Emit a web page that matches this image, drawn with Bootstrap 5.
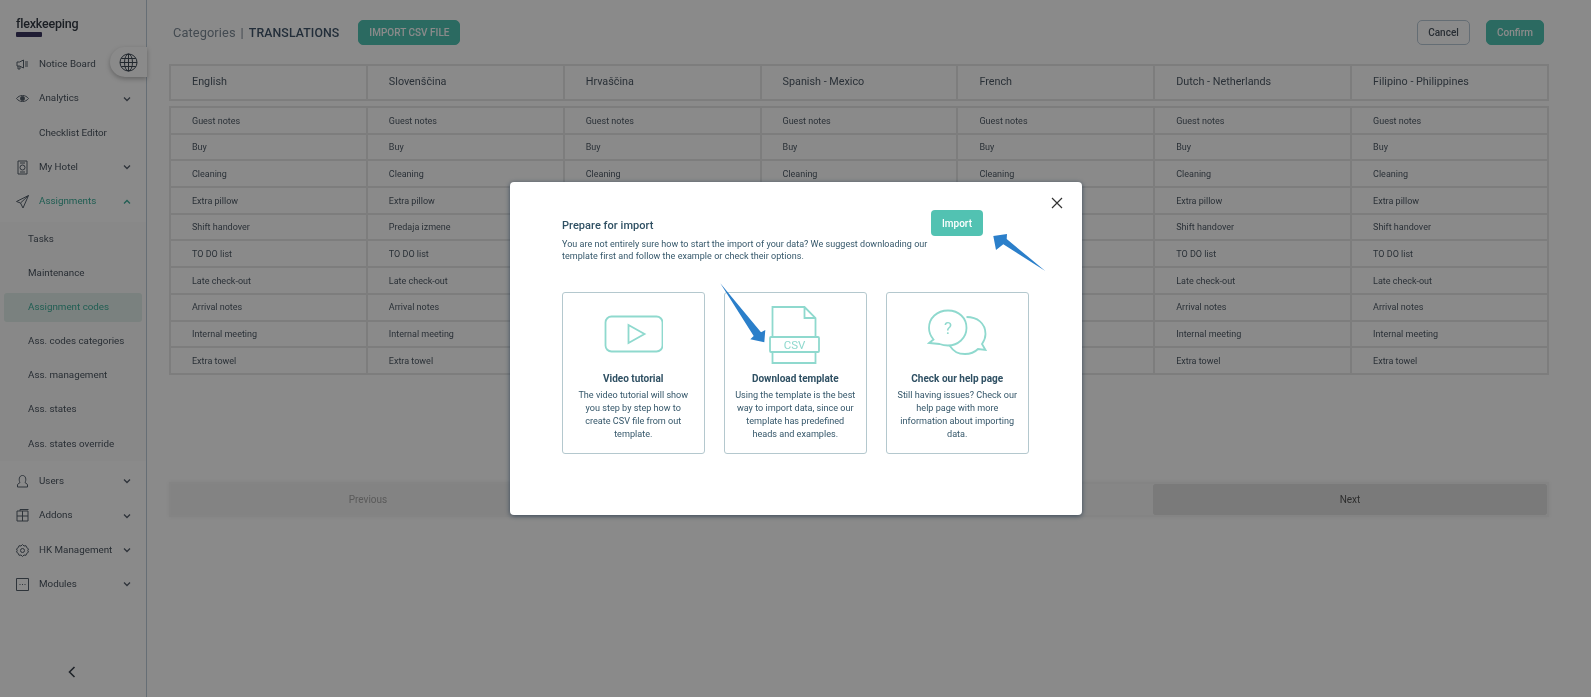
<!DOCTYPE html>
<html lang="en">
<head>
<meta charset="utf-8">
<title>Translations</title>
<link href="https://cdn.jsdelivr.net/npm/bootstrap@5.3.0/dist/css/bootstrap.min.css" rel="stylesheet">
<style>
html,body{height:100%;overflow:hidden}
body{font-family:Roboto,"Liberation Sans",sans-serif;background:#fff;color:#4a5a68}
.fk-shell{height:697px;filter:blur(.45px)}
.fk-side{width:147px;flex:none;border-right:1px solid #bccbd8;position:relative;padding-top:47px}
.fk-logo{position:absolute;left:16px;top:18px;line-height:1}
.fk-logo b{display:block;font-weight:500;font-size:12.5px;letter-spacing:-.2px;color:#333a44}
.fk-logo i{display:block;width:26px;height:5px;margin-top:1px;border-radius:1px;background:#3c3760}
.fk-globe{position:absolute;left:110px;top:47px;width:37px;height:30px;border-radius:15px 0 0 15px;background:#fff;box-shadow:0 2px 5px rgba(0,0,0,.28);display:flex;align-items:center;justify-content:center;z-index:2}
.fk-item{height:34.4px;padding-left:16px;padding-right:15px;font-size:9.8px;color:#4b5560;display:flex;align-items:center}
.fk-item svg.ic{width:13px;height:15px;flex:none;margin-right:10px;fill:none;stroke:#56606c;stroke-width:1}
.fk-item .sp{width:13px;flex:none;margin-right:10px}
.fk-item svg.ch{width:8px;height:6px;margin-left:auto;fill:none;stroke:#56606c;stroke-width:1.3}
.fk-item.on{color:#3dae9a}
.fk-item.on svg.ch{stroke:#3dae9a}
.fk-sub{margin-top:3px;margin-bottom:3px;background:#fcfcfc}
.fk-sublink{height:34.2px;padding-left:28px;font-size:9.8px;display:flex;align-items:center;color:#4b5560}
.fk-sublink.on{margin:2.5px 4px;height:29px;padding-left:24px;background:#e2efea;border-radius:3px;color:#3dae9a}
.fk-back{position:absolute;left:68px;top:666px;width:8px;height:12px;fill:none;stroke:#3a424c;stroke-width:1.6}
.fk-main{flex:1;padding:20px 47px 0 22px;min-width:0}
.fk-top{height:25px;margin-bottom:19px}
.fk-crumb{font-size:12.8px;color:#7d8a96;margin-left:4px;letter-spacing:.1px}
.fk-crumb i{font-style:normal;margin:0 5px}
.fk-crumb strong{font-weight:500;font-size:12.3px;color:#41566b}
.fk-btn{height:25px;padding:0 10px;font-size:10px;font-weight:500;line-height:23px;border-radius:5px}
.fk-teal{background:#50c4b4;border:1px solid #50c4b4;color:#fff}
.fk-csv{margin-left:19px}
.fk-ghost{background:#fff;border:1px solid #b9c9d6;color:#4b5560;width:53px;padding:0}
.fk-conf{width:58px;padding:0}
.fk-tbl{table-layout:fixed;width:1380px;margin:0;border-collapse:collapse}
.fk-tbl th,.fk-tbl td{border:2px solid #e7e7e7;padding:0 0 0 21px;vertical-align:middle;background:transparent;color:inherit;box-shadow:none}
.fk-tbl th{height:35px;font-size:10.8px;font-weight:400;color:#4e5a66}
.fk-tbl td{height:26.7px;padding-top:2px;font-size:9px;color:#4e5a66}
.fk-head{margin-bottom:5px!important}
.fk-pager{margin-top:107px;width:1380px;height:35px;border:2px solid #f4f4f4;box-shadow:0 0 4px rgba(0,0,0,.06)}
.fk-pg{font-size:10px;display:flex;align-items:center;justify-content:center;height:100%}
.fk-prev{width:394px;background:#f2f2f2;color:#a6a6a6}
.fk-gap{flex:1;background:#f8f8f8}
.fk-next{width:394px;background:#e2e2e2;color:#555;border-radius:2px}
.modal-backdrop.show{opacity:.46;background:#000}
.fk-dlg{max-width:572px;width:572px;min-height:100%}
.fk-modal{border:0;border-radius:4px;box-shadow:0 1px 5px rgba(28,50,72,.75);position:relative;padding:28px 53px 61px 52.5px;color:#35576a;filter:blur(.3px)}
.fk-x{position:absolute;left:541px;top:15px;width:12px;height:12px;stroke:#333;stroke-width:1.2;fill:none}
.fk-intro{width:369px;flex:none}
.fk-ttl{font-size:11px;font-weight:500;line-height:16px;margin:8px 0 4px;letter-spacing:.05px;color:#2f5063}
.fk-txt{font-size:9px;line-height:12px;margin:0;letter-spacing:.03px}
.fk-imp{width:52px;height:26px;background:#52c2b2;color:#fff;border:0;border-radius:4px;font-size:10px;font-weight:500;padding:0}
.fk-cards{margin-top:30px;gap:19.5px}
.fk-card{width:142.5px;height:161.5px;border:1px solid #b4c8ce;border-radius:3px;padding:13px 10px 0;text-align:center;flex:none}
.fk-pic{height:58px;display:block;margin:0 auto}
.fk-ct{font-size:10px;font-weight:700;line-height:13px;margin:8px 0 4px;color:#2f5063}
.fk-cd{font-size:9.1px;line-height:12.8px;margin:0}
.fk-arrows{position:absolute;left:0;top:0;width:572px;height:333px;pointer-events:none}
.fk-ico{fill:none;stroke:#8fd9ce;stroke-width:1.8}
.fk-ico text{fill:#8fd9ce;stroke:none;font-family:Roboto,sans-serif}
</style>
</head>
<body>
<div class="d-flex fk-shell">
  <aside class="fk-side">
    <div class="fk-logo"><b>flexkeeping</b><i></i></div>
    <div class="fk-globe"><svg width="19" height="19" viewBox="0 0 19 19" fill="none" stroke="#3f4a56" stroke-width="1"><circle cx="9.5" cy="9.5" r="8.5"/><ellipse cx="9.5" cy="9.5" rx="4" ry="8.5"/><path d="M9.5 1v17M1 9.5h17M2.2 5.5h14.6M2.2 13.5h14.6"/></svg></div>
    <div class="fk-item"><svg class="ic" viewBox="0 0 13 15"><path d="M1 5h2.500l4-2v8l-4-2H1zM2 9v3h2V9M9 5h3M9 7h3M9 9h3"/></svg>Notice Board</div>
    <div class="fk-item"><svg class="ic" viewBox="0 0 13 15"><path d="M.5 7.500C3.500 3.500 9.500 3.500 12.500 7.500 9.500 11.500 3.500 11.500.5 7.500z"/><circle cx="6.500" cy="7.500" r="2" fill="#56606c"/></svg>Analytics<svg class="ch" viewBox="0 0 8 6"><path d="M1 1.500l3 3 3-3"/></svg></div>
    <div class="fk-item"><span class="sp"></span>Checklist Editor</div>
    <div class="fk-item"><svg class="ic" viewBox="0 0 13 15"><path d="M2 1h9v13H2zM4 3h5M4 12h5"/><circle cx="6.500" cy="7.500" r="2.500"/></svg>My Hotel<svg class="ch" viewBox="0 0 8 6"><path d="M1 1.500l3 3 3-3"/></svg></div>
    <div class="fk-item on"><svg class="ic" viewBox="0 0 13 15"><path d="M12.500 1.500L.5 7.500l4 1.500 2.500 5zM12.500 1.500L4.500 9"/></svg>Assignments<svg class="ch" viewBox="0 0 8 6"><path d="M1 4.500l3-3 3 3"/></svg></div>
    <div class="fk-sub">
      <div class="fk-sublink">Tasks</div>
      <div class="fk-sublink">Maintenance</div>
      <div class="fk-sublink on">Assignment codes</div>
      <div class="fk-sublink">Ass. codes categories</div>
      <div class="fk-sublink">Ass. management</div>
      <div class="fk-sublink">Ass. states</div>
      <div class="fk-sublink">Ass. states override</div>
    </div>
    <div class="fk-item"><svg class="ic" viewBox="0 0 13 15"><path d="M4 8.500C2.500 6 3 1.500 6.500 1.500S10.500 6 9 8.500l2.500 2v2.500h-10v-2.500z"/></svg>Users<svg class="ch" viewBox="0 0 8 6"><path d="M1 1.500l3 3 3-3"/></svg></div>
    <div class="fk-item"><svg class="ic" viewBox="0 0 13 15"><path d="M1 3h11v10H1zM1 8h11M6.500 3v10M4 3V1.500h8.500"/></svg>Addons<svg class="ch" viewBox="0 0 8 6"><path d="M1 1.500l3 3 3-3"/></svg></div>
    <div class="fk-item"><svg class="ic" viewBox="0 0 13 15"><path d="M6.500 1.500l1.500 1.500 2 -.3.8 2 1.700 1.200-.7 1.600.7 1.600-1.700 1.200-.8 2-2-.3-1.500 1.500-1.500-1.500-2 .3-.8-2L.5 9.100l.7-1.600-.7-1.600 1.700-1.200.8-2 2 .3z"/><circle cx="6.500" cy="7.500" r="2"/></svg>HK Management<svg class="ch" viewBox="0 0 8 6"><path d="M1 1.500l3 3 3-3"/></svg></div>
    <div class="fk-item"><svg class="ic" viewBox="0 0 13 15"><path d="M.5 1.500h12v12H.5zM3.500 7.500h1M6 7.500h1M8.500 7.500h1"/></svg>Modules<svg class="ch" viewBox="0 0 8 6"><path d="M1 1.500l3 3 3-3"/></svg></div>
    <svg class="fk-back" viewBox="0 0 8 12"><path d="M6.500 1L1.500 6l5 5"/></svg>
  </aside>
  <main class="fk-main">
    <div class="d-flex align-items-center fk-top">
      <div class="fk-crumb">Categories<i>|</i><strong>TRANSLATIONS</strong></div>
      <button class="btn fk-btn fk-teal fk-csv">IMPORT CSV FILE</button>
      <button class="btn fk-btn fk-ghost ms-auto">Cancel</button>
      <button class="btn fk-btn fk-teal fk-conf ms-3">Confirm</button>
    </div>
    <table class="table fk-tbl fk-head">
      <thead><tr><th>English</th><th>Slovenščina</th><th>Hrvaščina</th><th>Spanish - Mexico</th><th>French</th><th>Dutch - Netherlands</th><th>Filipino - Philippines</th></tr></thead>
    </table>
    <table class="table fk-tbl">
      <tbody>
        <tr><td>Guest notes</td><td>Guest notes</td><td>Guest notes</td><td>Guest notes</td><td>Guest notes</td><td>Guest notes</td><td>Guest notes</td></tr>
        <tr><td>Buy</td><td>Buy</td><td>Buy</td><td>Buy</td><td>Buy</td><td>Buy</td><td>Buy</td></tr>
        <tr><td>Cleaning</td><td>Cleaning</td><td>Cleaning</td><td>Cleaning</td><td>Cleaning</td><td>Cleaning</td><td>Cleaning</td></tr>
        <tr><td>Extra pillow</td><td>Extra pillow</td><td></td><td></td><td></td><td>Extra pillow</td><td>Extra pillow</td></tr>
        <tr><td>Shift handover</td><td>Predaja izmene</td><td></td><td></td><td></td><td>Shift handover</td><td>Shift handover</td></tr>
        <tr><td>TO DO list</td><td>TO DO list</td><td></td><td></td><td></td><td>TO DO list</td><td>TO DO list</td></tr>
        <tr><td>Late check-out</td><td>Late check-out</td><td></td><td></td><td></td><td>Late check-out</td><td>Late check-out</td></tr>
        <tr><td>Arrival notes</td><td>Arrival notes</td><td></td><td></td><td></td><td>Arrival notes</td><td>Arrival notes</td></tr>
        <tr><td>Internal meeting</td><td>Internal meeting</td><td></td><td></td><td></td><td>Internal meeting</td><td>Internal meeting</td></tr>
        <tr><td>Extra towel</td><td>Extra towel</td><td></td><td></td><td></td><td>Extra towel</td><td>Extra towel</td></tr>
      </tbody>
    </table>
    <div class="d-flex fk-pager">
      <div class="fk-pg fk-prev">Previous</div>
      <div class="fk-gap"></div>
      <div class="fk-pg fk-next">Next</div>
    </div>
  </main>
</div>

<div class="modal-backdrop show"></div>
<div class="modal d-block" tabindex="-1">
  <div class="modal-dialog modal-dialog-centered fk-dlg my-0">
    <div class="modal-content fk-modal">
      <svg class="fk-x" viewBox="0 0 12 12"><path d="M1 1l10 10M11 1L1 11"/></svg>
      <div class="d-flex align-items-start">
        <div class="fk-intro">
          <h5 class="fk-ttl">Prepare for import</h5>
          <p class="fk-txt">You are not entirely sure how to start the import of your data? We suggest downloading our template first and follow the example or check their options.</p>
        </div>
        <button class="btn fk-imp">Import</button>
      </div>
      <div class="d-flex fk-cards">
        <div class="fk-card">
          <svg class="fk-pic fk-ico" width="60" height="58" viewBox="-1.500 0 60 58"><rect x="1" y="10.500" width="57" height="35" rx="6"/><path d="M24 19v18l16-9z"/></svg>
          <div class="fk-ct">Video tutorial</div>
          <p class="fk-cd">The video tutorial will show you step by step how to create CSV file from out template.</p>
        </div>
        <div class="fk-card">
          <svg class="fk-pic fk-ico" width="52" height="58" viewBox="0 0 52 58"><path d="M3.500 31V1h32l11 11v19M3.500 47v10h43V47M35.500 1v11h11"/><rect x="1" y="31" width="49" height="15" rx="1"/><text x="25.500" y="43" text-anchor="middle" font-size="11.500">CSV</text></svg>
          <div class="fk-ct">Download template</div>
          <p class="fk-cd">Using the template is the best way to import data, since our template has predefined heads and examples.</p>
        </div>
        <div class="fk-card">
          <svg class="fk-pic fk-ico" width="60" height="58" viewBox="0 -2 60 58"><path d="M2 35l4.500-3.500C3.500 28 2 24 2 20 2 10 10 2.500 21 2.500S39.500 10 39.500 20 31 37.500 21 37.500c-3.500 0-6.500-.8-8.500-1.500z"/><path d="M39.500 9C50 9 58.500 15 58.500 26c0 4-1.500 7-3.500 10l3.500 6-7.500-1c-3 3-8 5-13 5-7 0-11-2-15.500-8.500"/><text x="21" y="26" text-anchor="middle" font-size="17">?</text></svg>
          <div class="fk-ct">Check our help page</div>
          <p class="fk-cd">Still having issues? Check our help page with more information about importing data.</p>
        </div>
      </div>
      <svg class="fk-arrows" viewBox="509 182 572 333" fill="#2b7fca"><polygon points="719.300,283.300 760,332.300 764.300,330 763.300,342.300 749.300,339.300 752.700,336"/><polygon points="1044.300,271 1005.700,239 1006,234 992.300,236 995,250 1002.300,244.300"/></svg>
    </div>
  </div>
</div>
<script src="https://cdn.jsdelivr.net/npm/bootstrap@5.3.0/dist/js/bootstrap.bundle.min.js"></script>
</body>
</html>
